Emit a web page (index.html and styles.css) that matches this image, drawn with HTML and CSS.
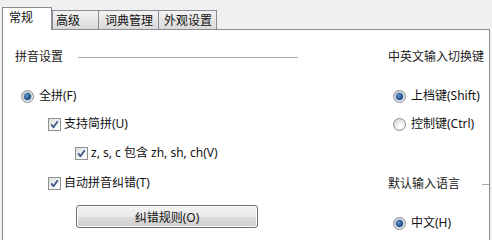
FILE: index.html
```html
<!DOCTYPE html>
<html lang="zh-CN">
<head>
<meta charset="utf-8">
<title>输入法设置</title>
<link rel="stylesheet" href="styles.css">
</head>
<body>
<div class="window">
  <div class="tabs">
    <div class="tab tab-active tab-w1">常规</div>
    <div class="tab tab-w2">高级</div>
    <div class="tab tab-w3">词典管理</div>
    <div class="tab tab-w4">外观设置</div>
  </div>
  <div class="panel">
    <div class="col-left">
      <div class="group-title"><span>拼音设置</span><i class="rule"></i></div>
      <div class="row row-first indent-1"><span class="radio checked"></span><span>全拼(F)</span></div>
      <div class="row row-2 indent-2"><span class="check"><svg viewBox="0 0 13 13" width="13" height="13"><path d="M3.2 6.4 L5.4 9.2 L9.8 3.2" fill="none" stroke="#3b5887" stroke-width="1.8" stroke-linejoin="round"/></svg></span><span>支持简拼(U)</span></div>
      <div class="row row-3 indent-3"><span class="check"><svg viewBox="0 0 13 13" width="13" height="13"><path d="M3.2 6.4 L5.4 9.2 L9.8 3.2" fill="none" stroke="#3b5887" stroke-width="1.8" stroke-linejoin="round"/></svg></span><span>z, s, c 包含 zh, sh, ch(V)</span></div>
      <div class="row row-4 indent-2"><span class="check"><svg viewBox="0 0 13 13" width="13" height="13"><path d="M3.2 6.4 L5.4 9.2 L9.8 3.2" fill="none" stroke="#3b5887" stroke-width="1.8" stroke-linejoin="round"/></svg></span><span>自动拼音纠错(T)</span></div>
      <button class="btn">纠错规则(O)</button>
    </div>
    <div class="col-right">
      <div class="group-title"><span>中英文输入切换键</span></div>
      <div class="row row-first indent-r"><span class="radio checked"></span><span>上档键(Shift)</span></div>
      <div class="row row-2 indent-r"><span class="radio"></span><span>控制键(Ctrl)</span></div>
      <div class="group-title title-2"><span>默认输入语言</span><i class="rule"></i></div>
      <div class="row row-first indent-r"><span class="radio checked"></span><span>中文(H)</span></div>
    </div>
  </div>
</div>
</body>
</html>
```

FILE: styles.css
```css
* { box-sizing: border-box; }
html, body {
  margin: 0;
  padding: 0;
  background: #f0f0f0;
}
body {
  font-family: "Noto Sans", "Noto Sans CJK SC", sans-serif;
  font-size: 12px;
  line-height: 16px;
  color: #111;
  width: 492px;
  height: 240px;
  overflow: hidden;
}
.window {
  display: flex;
  flex-direction: column;
  width: 492px;
  height: 240px;
  padding-left: 2px;
}
.tabs {
  display: flex;
  align-items: flex-end;
  height: 29px;
  flex: none;
}
.tab {
  height: 19px;
  padding: 2px 0 0 5px;
  border: 1px solid #898c95;
  border-bottom: none;
  background: linear-gradient(#f3f3f3, #e6e6e6 50%, #d9d9d9);
  white-space: nowrap;
  margin-left: -1px;
}
.tab-active {
  height: 23px;
  margin-bottom: -1px;
  margin-left: 0;
  background: #fff;
  padding-left: 6px;
  padding-top: 2px;
  position: relative;
  z-index: 1;
}
.tab-w1 { width: 50px; }
.tab-w2 { width: 47px; margin-left: 0; padding-left: 3px; }
.tab-w3 { width: 61px; padding-left: 6px; }
.tab-w4 { width: 59px; }

.panel {
  flex: 1;
  width: 488px;
  background: #fff;
  border: 1px solid #898c95;
  border-bottom: none;
  display: flex;
}
.col-left {
  width: 283px;
  margin-left: 12px;
  padding-top: 19px;
  display: flex;
  flex-direction: column;
}
.col-right {
  flex: 1;
  margin-left: 90px;
  padding-top: 19px;
  display: flex;
  flex-direction: column;
}
.group-title {
  display: flex;
  align-items: center;
  height: 16px;
  white-space: nowrap;
  color: #1a1a1a;
}
.rule {
  flex: 1;
  height: 1px;
  background: #a9a9a9;
  margin-left: 15px;
}
.title-2 { margin-top: 44px; }
.title-2 .rule { margin-left: 22px; }

.row {
  display: flex;
  align-items: center;
  height: 16px;
  white-space: nowrap;
}
.row-first { margin-top: 23px; }
.row-2 { margin-top: 12px; }
.row-3 { margin-top: 13px; }
.row-4 { margin-top: 14px; }
.indent-1 { padding-left: 6px; }
.indent-2 { padding-left: 33px; }
.indent-3 { padding-left: 60px; }
.indent-r { padding-left: 5px; }

.radio {
  width: 13px;
  height: 13px;
  flex: none;
  border-radius: 50%;
  border: 1px solid #8d8d8d;
  background: radial-gradient(circle at 60% 65%, #ffffff 0, #f4f4f4 35%, #d6d6d6 80%);
  margin-right: 5px;
  display: flex;
  align-items: center;
  justify-content: center;
}
.radio.checked::after {
  content: "";
  width: 7px;
  height: 7px;
  border-radius: 50%;
  background: radial-gradient(circle at 40% 40%, #6f9ccc 0, #2c5c94 45%, #173a64 90%);
  box-shadow: 0 0 0 1px #a9c2de;
}
.check {
  width: 13px;
  height: 13px;
  flex: none;
  border: 1px solid #8e8f8f;
  background: linear-gradient(135deg, #dcdcdc, #f6f6f6 60%, #ffffff);
  margin-right: 3px;
  display: flex;
}
.check svg {
  margin: -1px;
}
.btn {
  margin-top: 14px;
  margin-left: 61px;
  width: 182px;
  height: 23px;
  border: 1px solid #707070;
  border-radius: 3px;
  background: linear-gradient(#f2f2f2, #ebebeb 50%, #dddddd 51%, #cfcfcf);
  font-family: inherit;
  font-size: 12px;
  color: #111;
  padding: 0;
  box-shadow: inset 0 0 0 1px #fcfcfc;
}
```
